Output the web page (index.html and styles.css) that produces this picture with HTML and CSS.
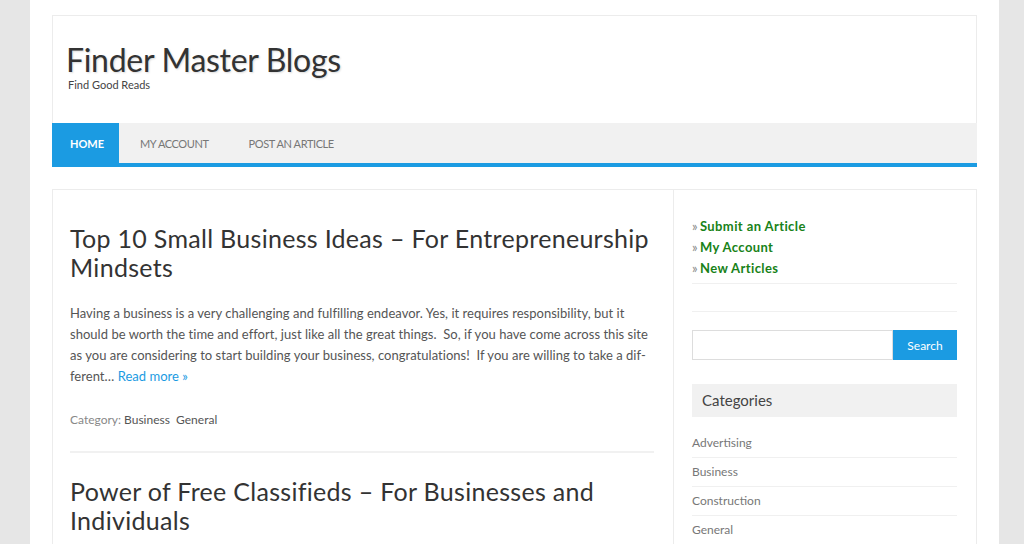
FILE: index.html
```html
<!DOCTYPE html>
<html lang="en">
<head>
<meta charset="utf-8">
<title>Finder Master Blogs</title>
<link rel="stylesheet" href="styles.css">
</head>
<body>
<div class="wrapper">
  <header class="site-header">
    <div class="branding">
      <h1 class="site-title">Finder Master Blogs</h1>
      <p class="site-desc">Find Good Reads</p>
    </div>
    <nav class="main-nav">
      <a class="nav-item active" href="#">HOME</a>
      <a class="nav-item" href="#">MY ACCOUNT</a>
      <a class="nav-item" href="#">POST AN ARTICLE</a>
    </nav>
  </header>

  <div class="main">
    <div class="content">
      <article class="post">
        <h2 class="post-title">Top 10 Small Business Ideas – For Entrepreneurship Mindsets</h2>
        <p class="excerpt">Having a business is a very challenging and fulfilling endeavor. Yes, it requires responsibility, but it should be worth the time and effort, just like all the great things.&nbsp; So, if you have come across this site as you are considering to start building your business, congratulations!&nbsp; If you are willing to take a dif­ferent… <a class="more" href="#">Read more »</a></p>
        <p class="meta"><span class="meta-label">Category:</span> <a href="#">Business</a>&nbsp; <a href="#">General</a></p>
      </article>
      <article class="post">
        <h2 class="post-title">Power of Free Classifieds – For Businesses and Individuals</h2>
      </article>
    </div>

    <aside class="sidebar">
      <ul class="quick-links">
        <li><span class="raquo">»</span> <a href="#">Submit an Article</a></li>
        <li><span class="raquo">»</span> <a href="#">My Account</a></li>
        <li><span class="raquo">»</span> <a href="#">New Articles</a></li>
      </ul>
      <div class="spacer"></div>
      <form class="search">
        <input class="search-input" type="text">
        <button class="search-btn" type="button">Search</button>
      </form>
      <div class="widget">
        <h3 class="widget-title">Categories</h3>
        <ul class="cat-list">
          <li><a href="#">Advertising</a></li>
          <li><a href="#">Business</a></li>
          <li><a href="#">Construction</a></li>
          <li><a href="#">General</a></li>
        </ul>
      </div>
    </aside>
  </div>
</div>
</body>
</html>
```

FILE: styles.css
```css
* { box-sizing: border-box; }

html, body {
  margin: 0;
  padding: 0;
  background: #e6e6e6;
  font-family: Lato, "Open Sans", sans-serif;
  color: #333;
  height: 100%;
  overflow: hidden;
}

a { text-decoration: none; }

.wrapper {
  margin-left: 30px;
  width: 969px;
  min-height: 544px;
  background: #fff;
  padding: 15px 22px 0 22px;
}

.site-header {
  border: 1px solid #ececec;
  border-bottom: none;
}

.branding {
  height: 107px;
  padding: 26px 0 0 13px;
}

.site-title {
  margin: 0;
  font-weight: 400;
  font-size: 32px;
  line-height: 36px;
  color: #333;
  letter-spacing: -0.3px;
  text-shadow: 1px 1px 2px rgba(0,0,0,0.15);
}

.site-desc {
  margin: 0 0 0 2px;
  font-size: 11px;
  color: #444;
}

.main-nav {
  display: flex;
  height: 44px;
  background: #f1f1f1;
  border-bottom: 4px solid #1b9be2;
  margin: 0 -1px;
}

.nav-item {
  display: block;
  height: 40px;
  line-height: 42px;
  font-size: 11px;
  letter-spacing: -0.4px;
  color: #777;
  padding: 0 20px;
}

.nav-item:nth-child(2) { padding-left: 21px; }

.nav-item.active {
  background: #1b9be2;
  color: #fff;
  font-weight: 700;
  font-size: 11px;
  letter-spacing: 0;
  padding: 0 18px;
  width: 67px;
}

.main {
  margin-top: 22px;
  border: 1px solid #ececec;
  border-bottom: none;
  display: flex;
  min-height: 400px;
}

.content {
  width: 621px;
  padding: 24px 19px 0 17px;
  border-right: 1px solid #ececec;
}

.post {
  border-bottom: 2px solid #f1f1f1;
  padding-bottom: 24px;
  margin-bottom: 24px;
}

.post-title {
  margin: 10px 0 21px;
  font-weight: 400;
  font-size: 25px;
  line-height: 29px;
  letter-spacing: 0.3px;
  color: #333;
}

.excerpt {
  margin: 0;
  font-size: 13px;
  line-height: 21px;
  letter-spacing: 0.03px;
  color: #555;
  hyphens: manual;
}

.more { color: #1b9be2; }

.meta {
  margin: 25px 0 0;
  font-size: 12px;
  color: #888;
}

.meta a { color: #555; }

.meta-label { color: #888; }

.sidebar {
  flex: 1;
  padding: 26px 19px 0 18px;
}

.quick-links {
  list-style: none;
  margin: 0;
  padding: 0 0 4px;
  border-bottom: 1px solid #f0f0f0;
}

.quick-links li {
  font-size: 13px;
  line-height: 21px;
}

.quick-links a {
  color: #188218;
  font-weight: 700;
  letter-spacing: 0.4px;
}

.raquo {
  color: #888;
  font-size: 13px;
  margin-right: -1px;
}

.spacer {
  height: 28px;
  border-bottom: 1px solid #f0f0f0;
}

.search {
  display: flex;
  margin-top: 18px;
  height: 30px;
}

.search-input {
  flex: 1;
  height: 30px;
  border: 1px solid #ddd;
  margin: 0;
  padding: 0;
}

.search-btn {
  width: 64px;
  height: 30px;
  border: none;
  background: #1b9be2;
  color: #fff;
  font-family: inherit;
  font-size: 12px;
  margin: 0;
  padding: 0;
}

.widget { margin-top: 24px; }

.widget-title {
  margin: 0;
  background: #f1f1f1;
  height: 33px;
  line-height: 33px;
  padding-left: 10px;
  font-weight: 400;
  font-size: 15px;
  color: #444;
}

.cat-list {
  list-style: none;
  margin: 12px 0 0;
  padding: 0;
}

.cat-list li {
  height: 29px;
  line-height: 28px;
  font-size: 12px;
  border-bottom: 1px solid #f0f0f0;
}

.cat-list a { color: #777; }
```
